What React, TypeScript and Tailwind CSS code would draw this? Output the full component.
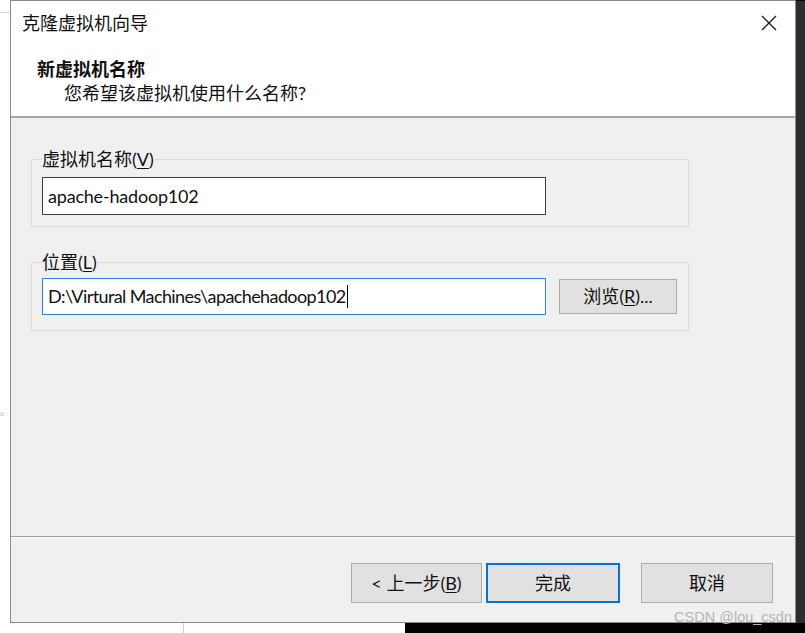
import React from "react";

const font = { fontFamily: 'Lato, "Noto Sans CJK SC", sans-serif' };

function WinButton({ children, primary = false, className = "" }: { children: React.ReactNode; primary?: boolean; className?: string }) {
  return (
    <div
      className={`flex items-center justify-center bg-[#e1e1e1] text-[18px] text-[#111] ${
        primary ? "border-2 border-[#0a6fcf]" : "border border-[#adadad]"
      } ${className}`}
    >
      {children}
    </div>
  );
}

function CloseIcon() {
  return (
    <svg width="16" height="16" viewBox="0 0 16 16" className="text-[#1a1a1a]">
      <path d="M1 1 L15 15 M15 1 L1 15" stroke="currentColor" strokeWidth="1.3" fill="none" />
    </svg>
  );
}

export default function App() {
  return (
    <div className="relative w-[805px] h-[633px] overflow-hidden bg-white" style={font}>
      {/* desktop behind the dialog */}
      <div className="absolute left-[405px] top-0 right-0 bottom-0 bg-black" />
      <div className="absolute left-[796px] top-[1px] right-0 h-[622px] bg-[#2d2d2d]" />
      <div className="absolute left-0 top-[12px] w-[10px] h-px bg-[#d6d6d6]" />
      <div className="absolute left-[183px] top-[623px] w-px h-[10px] bg-[#d0d0d0]" />
      <span className="absolute left-0 top-[404px] text-[10px] text-[#999]">。</span>

      {/* dialog window */}
      <div className="absolute left-[10px] top-0 w-[786px] h-[623px] flex flex-col border border-[#8c8c8c] bg-[#f0f0f0]">
        <div className="h-[46px] bg-white flex items-center justify-between pl-[11px] pr-[18px] pb-[3px]">
          <span className="text-[18px] text-[#111] leading-none">克隆虚拟机向导</span>
          <CloseIcon />
        </div>

        <div className="h-[71px] bg-white border-b-2 border-[#a9a9a9] pt-[10px] pl-[26px]">
          <div className="text-[18px] leading-[24px] font-bold text-[#111]">新虚拟机名称</div>
          <div className="text-[18px] leading-[24px] text-[#111] pl-[27px]">您希望该虚拟机使用什么名称?</div>
        </div>

        <div className="h-[418px] pl-[20px] pt-[30px] flex flex-col gap-[24px]">
          <fieldset className="w-[658px] border border-[#dcdcdc] px-[10px] pt-[7px] pb-[11px]">
            <legend className="text-[18px] leading-[22px] text-[#111] px-0">
              虚拟机名称(<span className="underline underline-offset-2">V</span>)
            </legend>
            <div className="w-[504px] h-[38px] bg-white border border-[#3d3d3d] flex items-center pl-[5px] text-[18px] text-[#111] tracking-[-0.2px]">
              apache-hadoop102
            </div>
          </fieldset>

          <fieldset className="w-[658px] border border-[#dcdcdc] px-[10px] pt-[5px] pb-[15px]">
            <legend className="text-[18px] leading-[22px] text-[#111] px-0">
              位置(<span className="underline underline-offset-2">L</span>)
            </legend>
            <div className="flex items-center gap-[13px]">
              <div className="w-[504px] h-[37px] bg-white border border-[#2b86d6] flex items-center pl-[5px] text-[18px] text-[#111] tracking-[-0.6px]">
                D:\Virtural Machines\apachehadoop102
                <span className="inline-block w-px h-[23px] bg-black ml-[1px]" />
              </div>
              <WinButton className="w-[118px] h-[35px]">
                浏览(<span className="underline underline-offset-2">R</span>)...
              </WinButton>
            </div>
          </fieldset>
        </div>

        <div className="h-px bg-[#a0a0a0]" />
        <div className="h-px bg-white" />

        <div className="flex-1 flex justify-end pt-[25px] pr-[22px]">
          <WinButton className="w-[131px] h-[40px]">
            &lt; 上一步(<span className="underline underline-offset-2">B</span>)
          </WinButton>
          <WinButton primary className="w-[134px] h-[40px] ml-[4px]">
            完成
          </WinButton>
          <WinButton className="w-[132px] h-[40px] ml-[21px]">取消</WinButton>
        </div>
      </div>

      <span
        className="absolute right-[13px] top-[608px] text-[14.5px] text-[#b4b4b4] leading-[18px]"
        style={{ fontFamily: '"Liberation Sans", Arial, sans-serif' }}
      >
        CSDN @lou_csdn
      </span>
    </div>
  );
}
